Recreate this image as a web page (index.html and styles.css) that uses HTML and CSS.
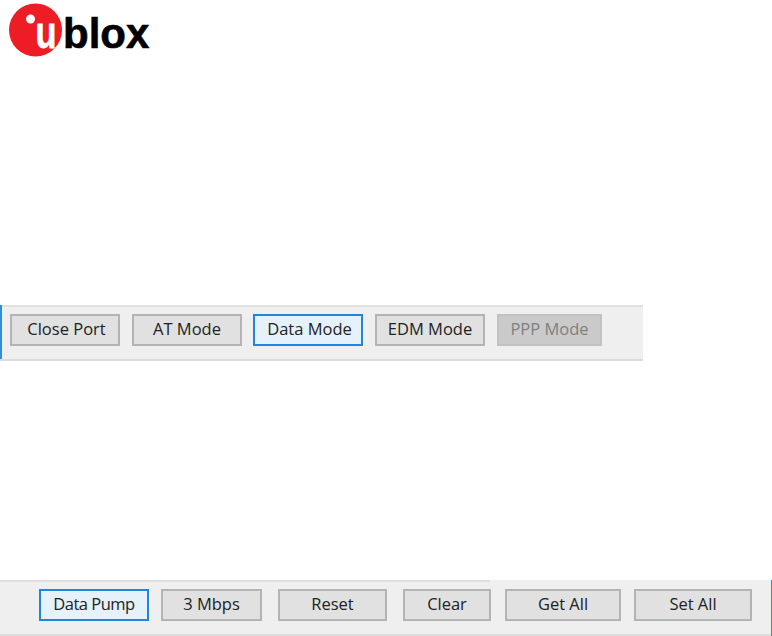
FILE: index.html
```html
<!DOCTYPE html>
<html>
<head>
<meta charset="utf-8">
<title>u-blox toolbars</title>
<link rel="stylesheet" href="styles.css">
</head>
<body>
<header class="logo">
  <svg class="logo-mark" width="160" height="60" viewBox="0 0 160 60">
    <circle class="red" cx="35.500" cy="30" r="26.500"/>
    <circle class="white" cx="30.500" cy="19" r="4.500"/>
    <text class="u" transform="translate(35.500 48) scale(.78 1)">u</text>
    <text class="blox" x="63" y="48">blox</text>
  </svg>
</header>
<section class="bar bar-mode">
  <button class="btn w110 shift">Close Port</button>
  <button class="btn w110">AT Mode</button>
  <button class="btn w110 active tight shift">Data Mode</button>
  <button class="btn w110">EDM Mode</button>
  <button class="btn w105 disabled">PPP Mode</button>
</section>
<section class="bar bar-bottom">
  <button class="btn w110 active narrow">Data Pump</button>
  <button class="btn w101">3 Mbps</button>
  <button class="btn w109">Reset</button>
  <button class="btn w88">Clear</button>
  <button class="btn w116">Get All</button>
  <button class="btn w118">Set All</button>
</section>
</body>
</html>
```
FILE: styles.css
```css
html, body { margin: 0; padding: 0; background: #fff; }
body { width: 772px; height: 636px; overflow: hidden; display: flex; flex-direction: column; font-family: "Open Sans", "Noto Sans", sans-serif; }
.logo { height: 305px; flex: none; }
.logo-mark { display: block; }
.red { fill: #ee1c25; }
.white { fill: #fff; }
.u { font: 700 44px "Liberation Sans", sans-serif; fill: #fff; stroke: #fff; stroke-width: 0.8; }
.blox { font: 700 42px "Liberation Sans", sans-serif; fill: #000; stroke: #000; stroke-width: 0.6; }
.bar { display: flex; align-items: flex-start; box-sizing: border-box; height: 56px; background: #efefef; border-bottom: 2px solid #dcdcdc; padding-top: 9px; flex: none; }
.bar-mode { width: 643px; padding-left: 10px; background: linear-gradient(#e0e0e0, #e0e0e0) 0 0 / 100% 2px no-repeat, #efefef; box-shadow: inset 2px 0 0 #2e8fe0; gap: 12px; margin-bottom: 219px; }
.bar-bottom { width: 771px; padding-left: 39px; background: linear-gradient(#e0e0e0, #e0e0e0) 0 0 / 490px 2px no-repeat, #efefef; box-shadow: 1px 0 0 #2e8fe0; }
.btn { box-sizing: border-box; height: 32px; padding: 0 0 3px; background: #e1e1e1; border: 2px solid #b4b4b4; color: #222; font: 400 16.5px "Open Sans", sans-serif; flex: none; }
.shift { padding-left: 3px; }
.tight { margin-left: -1px; }
.narrow { letter-spacing: -0.5px; }
.active { background: #e5f1fb; border-color: #1f86dc; }
.disabled { background: #cacaca; border-color: #c2c2c2; color: #808080; }
.w110 { width: 110px; }
.w105 { width: 105px; }
.w101 { width: 101px; margin-left: 12px; }
.w109 { width: 109px; margin-left: 16px; }
.w88 { width: 88px; margin-left: 16px; }
.w116 { width: 116px; margin-left: 14px; }
.w118 { width: 118px; margin-left: 13px; }
```
